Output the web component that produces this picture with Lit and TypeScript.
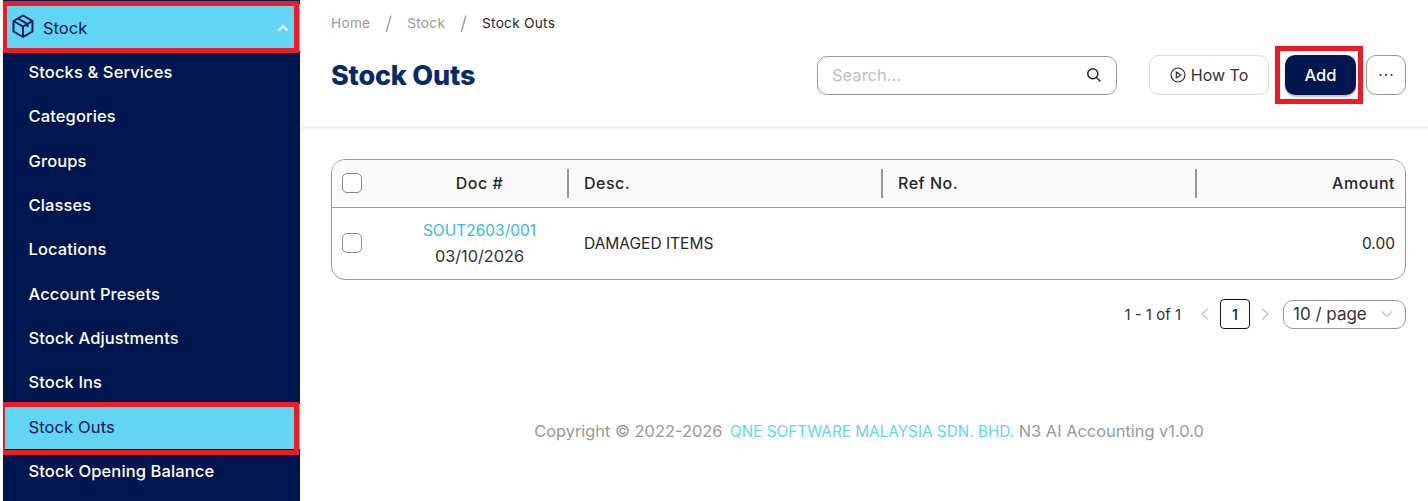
import { LitElement, html, css } from "lit";
import { customElement } from "lit/decorators.js";

const items = ["Stocks & Services","Categories","Groups","Classes","Locations","Account Presets","Stock Adjustments","Stock Ins","Stock Outs","Stock Opening Balance"];

@customElement("app-root")
export class AppRoot extends LitElement {
  static styles = css`
    :host { display:block; width:1428px; height:501px; overflow:hidden; background:#fff;
      font-family:Inter,"Liberation Sans",sans-serif; color:#262626; }
    * { box-sizing:border-box; }
    .page { display:flex; height:501px; }
    .side { margin-left:3px; width:297px; background:#00164f; flex:none; padding-top:4px; height:501px; overflow:hidden; }
    .head { height:47px; background:#62d5f5; color:#00164f; display:flex; align-items:center; padding:0 11px 0 8px; gap:8px; font-size:16.5px; position:relative; }
    .head svg.cube { transform:translateY(-2px); }
    .head svg.chev { margin-left:auto; }
    .mark::after { content:""; position:absolute; border:5px solid #ea1c24; pointer-events:none; }
    .head.mark::after { left:-1px; right:1px; top:-3px; bottom:-2px; }
    .list { margin-top:-1px; }
    .item { height:44.3px; display:flex; align-items:center; padding-left:25.5px; color:#fff; font-size:16.5px; font-weight:500; position:relative; white-space:nowrap; letter-spacing:.12px; }
    .item.on { background:#62d5f5; color:#00164f; font-weight:400; }
    .item.on.mark::after { left:-3px; right:1px; top:-2px; bottom:-6px; }
    .main { flex:1; min-width:0; display:flex; flex-direction:column; }
    .top { height:129px; border-bottom:3px solid #f2f2f2; padding:0 22px 0 31px; }
    .crumb { display:flex; align-items:center; height:46px; font-size:13.7px; color:#999; letter-spacing:.25px; }
    .crumb .sep { margin:0 15px; font-size:19px; color:#8c8c8c; font-weight:300; }
    .crumb .cur { color:#262626; }
    .bar { display:flex; align-items:center; height:48px; margin-top:5px; }
    h1 { margin:0; font-size:27px; font-weight:800; color:#072a68; letter-spacing:-.2px; }
    .search { margin-left:auto; width:300px; height:39px; border:1px solid #999; border-radius:10px; display:flex; align-items:center; padding:0 14px; color:#bfbfbf; font-size:16.5px; justify-content:space-between; }
    .search svg { color:#262626; }
    .how { margin-left:32px; width:120px; height:40px; border:1px solid #d9d9d9; border-radius:10px; display:flex; align-items:center; justify-content:center; gap:5px; font-size:16px; color:#333; background:#fff; }
    .addwrap { margin-left:16px; width:71px; height:40px; position:relative; }
    .add { width:100%; height:40px; background:#00164f; color:#fff; font-size:16.5px; font-weight:500; border-radius:10px; display:flex; align-items:center; justify-content:center; box-shadow:0 2px 2px rgba(0,0,0,.25); }
    .addwrap.mark::after { left:-10px; right:-7px; top:-9px; bottom:-9px; }
    .more { margin-left:10px; width:40px; height:40px; border:1px solid #999; border-radius:10px; display:flex; align-items:center; justify-content:center; }
    .table { margin:30px 22px 0 31px; height:121px; border:1px solid #999; border-radius:14px; overflow:hidden; }
    .row { display:grid; grid-template-columns:236px 314px 314px 1fr; }
    .thead { height:48px; background:#fafafa; border-bottom:1px solid #999; font-size:16px; font-weight:500; align-items:center; letter-spacing:.5px; }
    .thead .cell { padding-bottom:2px; }
    .tbody { height:71px; align-items:center; font-size:15.5px; }
    .cell { display:flex; align-items:center; height:100%; padding:0 10px 0 16px; position:relative; }
    .first { padding:0 0 0 10px; }
    .box { width:20px; height:20px; border:1px solid #8c8c8c; border-radius:5px; background:#fff; flex:none; }
    .tbody .box { margin-top:-2px; }
    .mid { flex:1; text-align:center; padding-left:44px; padding-right:15px; }
    .sepl { border-left:2px solid #999; height:29px; position:absolute; left:-1px; top:9px; }
    .right { justify-content:flex-end; }
    .doc { color:#38b6f5; font-size:15.5px; line-height:26px; }
    .date { font-size:16.3px; line-height:25px; color:#333; }
    .pager { display:flex; align-items:center; justify-content:flex-end; margin:20px 22px 0 0; height:30px; font-size:15px; color:#333; transform:translateY(-1px); }
    .cur1 { width:30px; height:30px; border:1px solid #00164f; border-radius:4px; display:flex; align-items:center; justify-content:center; color:#00164f; font-weight:500; font-size:14px; margin:0 10px; }
    .size { margin-left:12px; width:123px; height:29px; border:1px solid #999; border-radius:10px; display:flex; align-items:center; justify-content:space-between; padding:0 12px 0 9px; font-size:17px; }
    .foot { margin-top:91px; padding-left:10px; text-align:center; color:#999; font-size:16.4px; white-space:nowrap; }
    .foot span { color:#62d5f5; font-size:15.3px; margin-left:3px; }
  `;

  render() {
    return html`<div class="page">
      <nav class="side">
        <div class="head mark">
          <svg class="cube" width="24" height="24" viewBox="0 0 24 24" fill="none" stroke="#00164f" stroke-width="1.9" stroke-linejoin="round"><path d="M12 1.5 21.5 7v10.5L12 23 2.5 17.5V7Z"/><path d="M2.5 7 12 12.5 21.5 7M12 12.5V23M7 4.5l9.5 5.5v3"/></svg>
          <span>Stock</span>
          <svg class="chev" width="12" height="12" viewBox="0 0 12 12" fill="none" stroke="#fff" stroke-width="2.2"><path d="M1.5 8.5 6 4l4.5 4.5"/></svg>
        </div>
        <div class="list">
          ${items.map(i => html`<div class="item ${i === "Stock Outs" ? "on mark" : ""}">${i}</div>`)}
        </div>
      </nav>
      <main class="main">
        <div class="top">
          <div class="crumb"><span>Home</span><span class="sep">/</span><span>Stock</span><span class="sep">/</span><span class="cur">Stock Outs</span></div>
          <div class="bar">
            <h1>Stock Outs</h1>
            <div class="search"><span>Search...</span>
              <svg width="16" height="16" viewBox="0 0 16 16" fill="none" stroke="currentColor" stroke-width="1.5"><circle cx="6.8" cy="6.8" r="5"/><path d="m10.5 10.5 4 4"/></svg>
            </div>
            <div class="how">
              <svg width="16" height="16" viewBox="0 0 16 16" fill="none" stroke="#333" stroke-width="1.2"><circle cx="8" cy="8" r="7"/><path d="M6.3 5v6L11 8Z" stroke-linejoin="round"/></svg>
              How To
            </div>
            <div class="addwrap mark"><div class="add">Add</div></div>
            <div class="more"><svg width="16" height="4" viewBox="0 0 16 4" fill="#333"><circle cx="2.5" cy="2" r="1.1"/><circle cx="8" cy="2" r="1.1"/><circle cx="13.5" cy="2" r="1.1"/></svg></div>
          </div>
        </div>
        <div class="table">
          <div class="row thead">
            <div class="cell first"><div class="box"></div><div class="mid">Doc #</div></div>
            <div class="cell"><i class="sepl"></i>Desc.</div>
            <div class="cell"><i class="sepl"></i>Ref No.</div>
            <div class="cell right"><i class="sepl"></i>Amount</div>
          </div>
          <div class="row tbody">
            <div class="cell first"><div class="box"></div><div class="mid"><div class="doc">SOUT2603/001</div><div class="date">03/10/2026</div></div></div>
            <div class="cell">DAMAGED ITEMS</div>
            <div class="cell"></div>
            <div class="cell right">0.00</div>
          </div>
        </div>
        <div class="pager">
          <span>1 - 1 of 1</span>
          <svg style="margin-left:18px" width="11" height="14" viewBox="0 0 11 14" fill="none" stroke="#bfbfbf" stroke-width="1.2"><path d="M9 1.5 3 7l6 5.5"/></svg>
          <div class="cur1">1</div>
          <svg width="11" height="14" viewBox="0 0 11 14" fill="none" stroke="#bfbfbf" stroke-width="1.2"><path d="m2 1.5 6 5.5-6 5.5"/></svg>
          <div class="size">10 / page
            <svg width="12" height="8" viewBox="0 0 12 8" fill="none" stroke="#bfbfbf" stroke-width="1.1"><path d="m1 1.5 5 5 5-5"/></svg>
          </div>
        </div>
        <div class="foot">Copyright © 2022-2026 <span>QNE SOFTWARE MALAYSIA SDN. BHD.</span> N3 AI Accounting v1.0.0</div>
      </main>
    </div>`;
  }
}
